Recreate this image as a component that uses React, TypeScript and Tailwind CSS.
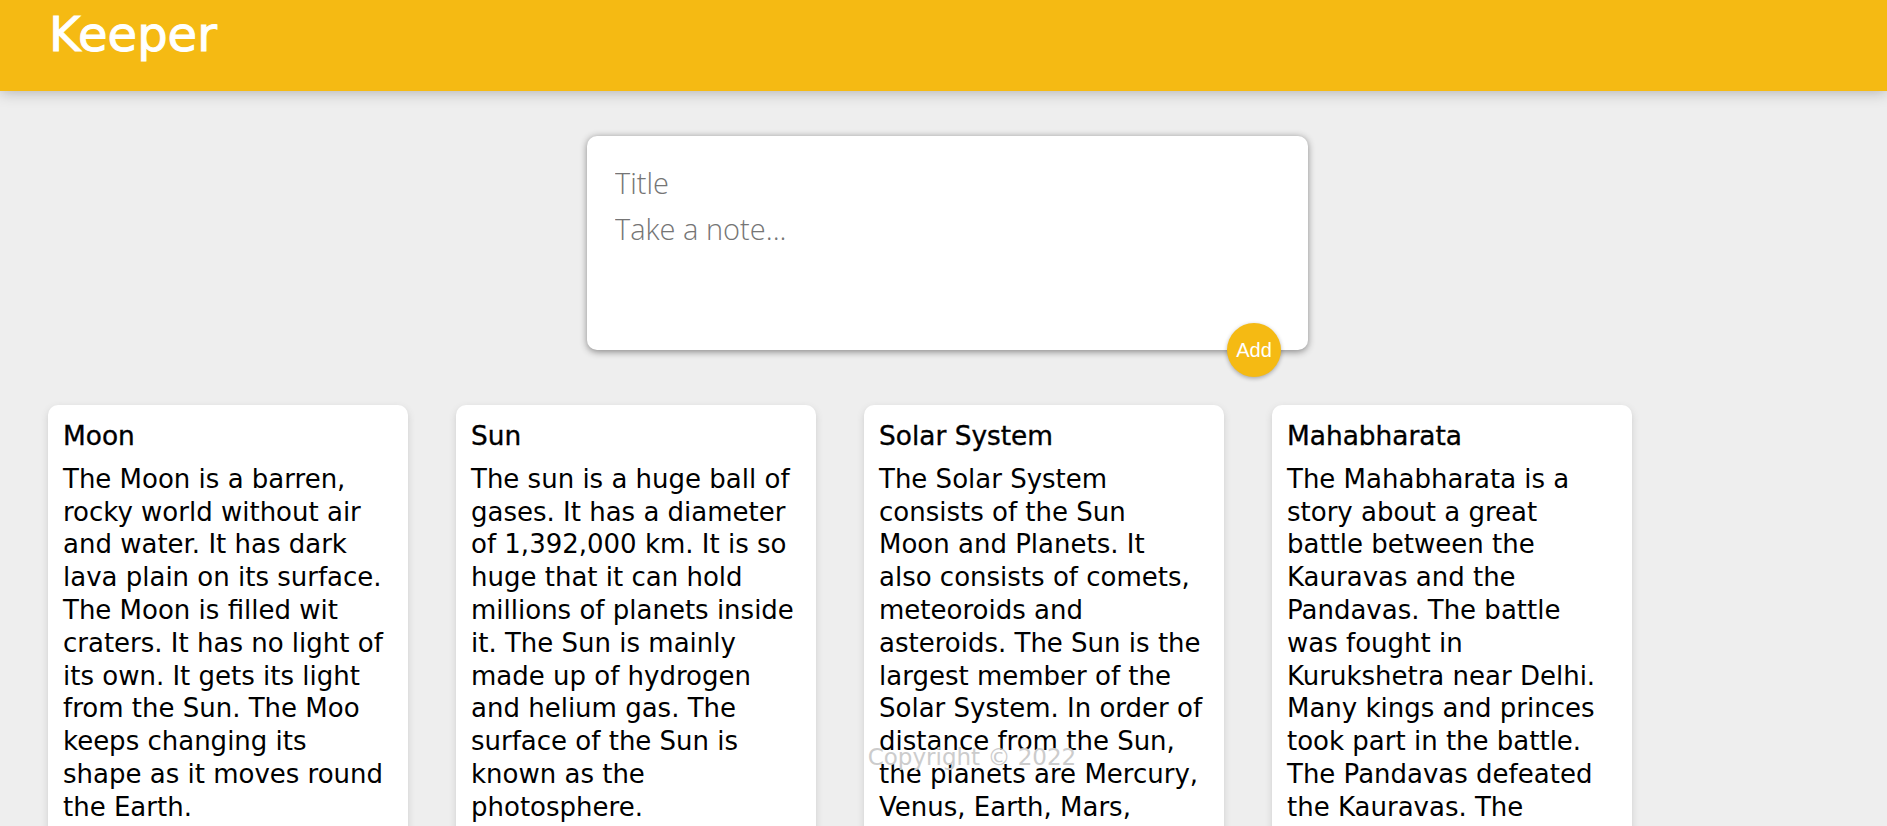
import { useState } from "react";

interface Note {
  title: string;
  content: string;
}

const notes: Note[] = [
  {
    title: "Moon",
    content:
      "The Moon is a barren,\nrocky world without air\nand water. It has dark\nlava plain on its surface.\nThe Moon is filled wit\ncraters. It has no light of\nits own. It gets its light\nfrom the Sun. The Moo\nkeeps changing its\nshape as it moves round\nthe Earth.",
  },
  {
    title: "Sun",
    content:
      "The sun is a huge ball of\ngases. It has a diameter\nof 1,392,000 km. It is so\nhuge that it can hold\nmillions of planets inside\nit. The Sun is mainly\nmade up of hydrogen\nand helium gas. The\nsurface of the Sun is\nknown as the\nphotosphere.",
  },
  {
    title: "Solar System",
    content:
      "The Solar System\nconsists of the Sun\nMoon and Planets. It\nalso consists of comets,\nmeteoroids and\nasteroids. The Sun is the\nlargest member of the\nSolar System. In order of\ndistance from the Sun,\nthe planets are Mercury,\nVenus, Earth, Mars,\nJupiter, Saturn, Uranus\nand Neptune.",
  },
  {
    title: "Mahabharata",
    content:
      "The Mahabharata is a\nstory about a great\nbattle between the\nKauravas and the\nPandavas. The battle\nwas fought in\nKurukshetra near Delhi.\nMany kings and princes\ntook part in the battle.\nThe Pandavas defeated\nthe Kauravas. The\nbattle lasted for\neighteen days.",
  },
];

function Header() {
  return (
    <header className="h-[91px] bg-[#f5ba13] px-[49px] pt-[6px] shadow-[0_0_15px_0_rgba(0,0,0,0.3)] relative z-10">
      <h1 className="text-[48px] leading-[56px] text-white font-['DejaVu_Sans',sans-serif] font-normal [-webkit-text-stroke:1px_white]">
        Keeper
      </h1>
    </header>
  );
}

function CreateArea() {
  const [title, setTitle] = useState("");
  const [content, setContent] = useState("");

  return (
    <div className="pl-[8px]">
      <form
        onSubmit={(e) => e.preventDefault()}
        className="relative mx-auto mt-[45px] w-[721px] h-[214px] bg-white rounded-[10px] pl-[28px] pr-[17px] pt-[23px] shadow-[0_1.5px_7.5px_rgb(138,137,137)]"
      >
        <input
          value={title}
          onChange={(e) => setTitle(e.target.value)}
          placeholder="Title"
          className="block w-full h-[46px] outline-none text-[29px] text-[#333] placeholder:text-[#757575] font-['Open_Sans',sans-serif] font-light"
        />
        <textarea
          value={content}
          onChange={(e) => setContent(e.target.value)}
          placeholder="Take a note..."
          rows={3}
          className="block w-full mt-[6px] h-[118px] resize-none outline-none text-[29px] leading-[36px] text-[#333] placeholder:text-[#757575] font-['Open_Sans',sans-serif] font-light"
        />
        <button
          type="submit"
          className="absolute right-[27px] bottom-[-27px] w-[54px] h-[54px] rounded-full bg-[#f5ba13] text-white text-[20px] font-['Liberation_Sans',Arial,sans-serif] shadow-[0_1.5px_4.5px_rgba(0,0,0,0.3)]"
        >
          Add
        </button>
      </form>
    </div>
  );
}

function NoteCard({ title, content }: Note) {
  return (
    <div className="w-[360px] shrink-0 bg-white rounded-[10px] p-[15px] shadow-[0_3px_7.5px_#ccc] font-['DejaVu_Sans',sans-serif] text-black">
      <h1 className="text-[26.4px] leading-[32.8px] mb-[10px] font-medium [-webkit-text-stroke:0.35px_black]">
        {title}
      </h1>
      <p className="text-[26px] leading-[32.8px] mb-[15px] whitespace-pre-line">
        {content}
      </p>
    </div>
  );
}

export default function App() {
  return (
    <div className="relative min-h-[826px] bg-[#eeeeee] overflow-hidden">
      <Header />
      <CreateArea />
      <div className="flex items-start gap-[48px] pl-[48px] mt-[55px]">
        {notes.map((note) => (
          <NoteCard key={note.title} {...note} />
        ))}
      </div>
      <footer className="absolute left-0 right-0 top-[743px] pl-[57px] text-center">
        <p className="text-[23px] leading-[28px] text-[#cccccc] font-['DejaVu_Sans',sans-serif]">
          Copyright © 2022
        </p>
      </footer>
    </div>
  );
}
